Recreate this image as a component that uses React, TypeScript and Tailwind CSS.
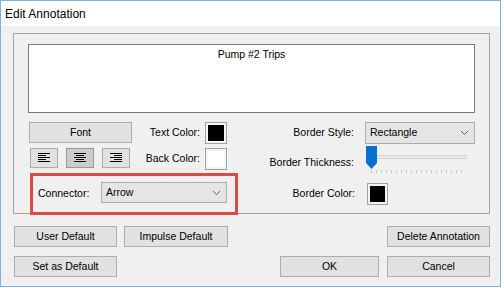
import React from 'react'

const btn =
  'flex items-center justify-center bg-[#e1e1e1] border border-[#adadad] text-[10.5px] text-black'

const Chevron = () => (
  <svg width="9" height="6" viewBox="0 0 9 6" className="shrink-0">
    <path d="M1 1 L4.5 4.5 L8 1" fill="none" stroke="#606060" strokeWidth="1" />
  </svg>
)

const AlignIcon = ({ align }: { align: 'left' | 'center' | 'right' }) => {
  const lines = [12, 8, 12, 8, 12]
  return (
    <svg width="12" height="10" viewBox="0 0 12 10">
      {lines.map((w, i) => {
        const x = align === 'left' ? 0 : align === 'right' ? 12 - w : (12 - w) / 2
        return <rect key={i} x={x} y={i * 2} width={w} height="1" fill="#000" />
      })}
    </svg>
  )
}

const Swatch = ({ color }: { color: string }) => (
  <div className="w-[22px] h-[22px] border border-[#a0a0a0] bg-[#f4f4f4] p-[2px]">
    <div className="w-full h-full" style={{ background: color }} />
  </div>
)

const Slider = () => (
  <div className="relative w-[104px] h-[27px]">
    <div className="absolute left-[3px] top-[9px] w-[98px] h-[4px] bg-[#e7e7e7] border border-[#d6d6d6]" />
    <svg className="absolute left-0 top-0" width="12" height="23" viewBox="0 0 12 23">
      <path d="M0 0 H11 V17 L5.5 23 L0 17 Z" fill="#0a6fd1" />
    </svg>
    <div className="absolute left-[5px] top-[24px] flex gap-[4px]">
      {Array.from({ length: 19 }).map((_, i) => (
        <div key={i} className="w-px h-[3px] bg-[#c8c8c8]" />
      ))}
    </div>
  </div>
)

export default function App() {
  return (
    <div className="w-[504px] h-[288px] bg-white" style={{ fontFamily: '"Liberation Sans", Arial, sans-serif' }}>
      <div className="w-[501px] h-[287px] border border-[#7fb0e0] flex flex-col">
        {/* title bar */}
        <div className="h-[25px] bg-white flex items-center pl-[4px] text-[12px] text-black">
          Edit Annotation
        </div>

        <div className="flex-1 bg-[#f0f0f0] pl-[12px] pt-[7px] text-[10.5px] text-black">
          {/* group box */}
          <div className="w-[477px] h-[181px] border border-[#a3a3a3] pl-[14px] pt-[10px]">
            <div className="w-[447px] h-[69px] bg-white border border-[#7a7a7a] flex justify-center pt-[2px]">
              Pump #2 Trips
            </div>

            {/* row 1 */}
            <div className="flex mt-[8px] h-[23px] items-center">
              <div className="w-[210px] flex items-center">
                <div className={`${btn} ml-[1px] w-[103px] h-[21px]`}>Font</div>
                <div className="ml-auto mr-[11px] flex items-center gap-[5px]">
                  <span>Text Color:</span>
                  <Swatch color="#000" />
                </div>
              </div>
              <div className="flex items-center">
                <span className="w-[116px] text-right">Border Style:</span>
                <div className="ml-[11px] w-[110px] h-[22px] bg-[#e5e5e5] border border-[#acacac] flex items-center pl-[4px] pr-[5px]">
                  <span className="flex-1">Rectangle</span>
                  <Chevron />
                </div>
              </div>
            </div>

            {/* row 2 */}
            <div className="flex mt-[1px] h-[26px]">
              <div className="w-[210px] flex items-start pt-[3px]">
                <div className="ml-[2px] flex gap-[8px]">
                  <div className={`${btn} w-[28px] h-[20px]`}>
                    <AlignIcon align="left" />
                  </div>
                  <div className="flex items-center justify-center w-[28px] h-[20px] bg-[#cccccc] border border-[#989898]">
                    <AlignIcon align="center" />
                  </div>
                  <div className={`${btn} w-[28px] h-[20px]`}>
                    <AlignIcon align="right" />
                  </div>
                </div>
                <div className="ml-auto mr-[11px] flex items-center gap-[5px]">
                  <span>Back Color:</span>
                  <Swatch color="#fff" />
                </div>
              </div>
              <div className="flex items-start">
                <span className="w-[116px] text-right pt-[10px]">Border Thickness:</span>
                <div className="ml-[12px] pt-[1px]">
                  <Slider />
                </div>
              </div>
            </div>

            {/* row 3 */}
            <div className="flex mt-[2px]">
              <div className="ml-[2px] w-[208px] h-[42px] border-[3px] border-[#dc4a45] flex items-center pl-[5px]">
                <span className="w-[63px]">Connector:</span>
                <div className="w-[126px] h-[21px] bg-[#e5e5e5] border border-[#acacac] flex items-center pl-[4px] pr-[5px] mb-[3px]">
                  <span className="flex-1">Arrow</span>
                  <Chevron />
                </div>
              </div>
              <div className="flex items-center ml-[1px] h-[42px]">
                <span className="w-[116px] text-right">Border Color:</span>
                <div className="ml-[12px]">
                  <div className="w-[21px] h-[22px] border border-[#a0a0a0] bg-[#f4f4f4] p-[2px]">
                    <div className="w-full h-full bg-black" />
                  </div>
                </div>
              </div>
            </div>
          </div>

          {/* bottom buttons */}
          <div className="flex mt-[12px] pl-[1px]">
            <div className={`${btn} w-[103px] h-[21px]`}>User Default</div>
            <div className={`${btn} ml-[7px] w-[104px] h-[21px]`}>Impulse Default</div>
            <div className={`${btn} ml-auto mr-[10px] w-[103px] h-[21px]`}>Delete Annotation</div>
          </div>
          <div className="flex mt-[9px] pl-[1px]">
            <div className={`${btn} w-[103px] h-[21px]`}>Set as Default</div>
            <div className={`${btn} ml-auto w-[99px] h-[21px]`}>OK</div>
            <div className={`${btn} ml-[8px] mr-[10px] w-[103px] h-[21px]`}>Cancel</div>
          </div>
        </div>
      </div>
    </div>
  )
}
